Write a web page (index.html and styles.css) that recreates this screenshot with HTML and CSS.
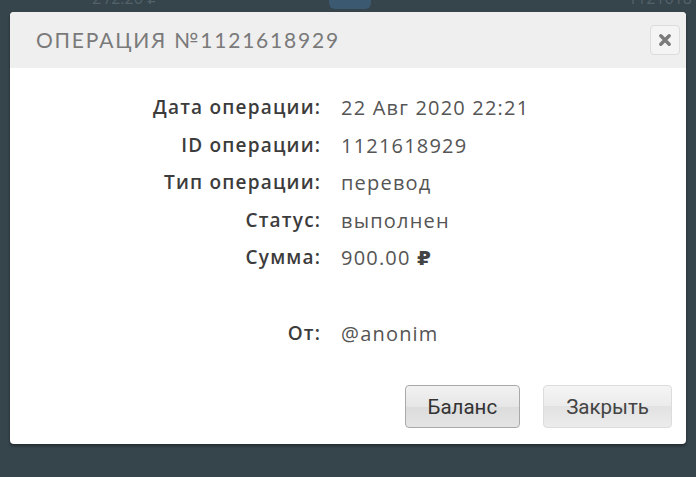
FILE: index.html
```html
<!DOCTYPE html>
<html lang="ru">
<head>
  <meta charset="UTF-8">
  <meta name="viewport" content="width=device-width, initial-scale=1.0">
  <title>Операция №1121618929</title>
  <link rel="stylesheet" href="styles.css">
</head>
<body>
  <div class="backdrop-row">
    <span class="bg-sum">2 /2.26 ₽</span>
    <span class="bg-badge"></span>
    <span class="bg-id">1121618</span>
  </div>
  <div class="modal">
    <header class="modal-header">
      <h2 class="modal-title">Операция №1121618929</h2>
      <button class="close-btn" type="button" aria-label="Закрыть">
        <svg width="14" height="14" viewBox="0 0 14 14">
          <path d="M2.8 2.8 L11.2 11.2 M11.2 2.8 L2.8 11.2" stroke="#7a7a7a" stroke-width="3.4" stroke-linecap="round"/>
        </svg>
      </button>
    </header>
    <div class="modal-body">
      <dl class="details">
        <dt>Дата операции:</dt><dd>22 Авг 2020 22:21</dd>
        <dt>ID операции:</dt><dd>1121618929</dd>
        <dt>Тип операции:</dt><dd>перевод</dd>
        <dt>Статус:</dt><dd>выполнен</dd>
        <dt>Сумма:</dt><dd>900.00 <b class="rub">₽</b></dd>
        <dt class="spacer"></dt><dd class="spacer"></dd>
        <dt>От:</dt><dd>@anonim</dd>
      </dl>
    </div>
    <footer class="modal-footer">
      <button class="btn btn-active" type="button">Баланс</button>
      <button class="btn" type="button">Закрыть</button>
    </footer>
  </div>
</body>
</html>
```

FILE: styles.css
```css
body {
  margin: 0;
  background: #36444b;
  font-family: "Open Sans", "DejaVu Sans", sans-serif;
  height: 477px;
  overflow: hidden;
}
.backdrop-row {
  height: 12px;
  overflow: hidden;
  display: flex;
  align-items: flex-end;
  font-size: 16px;
  line-height: 16px;
  color: #52626a;
}
.bg-sum {
  margin-left: 92px;
  margin-bottom: 6px;
}
.bg-badge {
  width: 42px;
  height: 9px;
  margin-left: 172px;
  margin-bottom: 3px;
  border-radius: 0 0 6px 6px;
  background: #3b5a72;
}
.bg-id {
  margin-left: auto;
  margin-right: 4px;
  margin-bottom: 6px;
}
.modal {
  margin: 0 10px;
  background: #fff;
  border-radius: 4px;
  box-shadow: 0 2px 3px rgba(0, 0, 0, 0.35);
  overflow: hidden;
}
.modal-header {
  height: 56px;
  background: #efefef;
  display: flex;
  align-items: center;
  justify-content: space-between;
  padding: 0 6px 0 26px;
}
.modal-title {
  margin: 0 0 2px;
  font-family: "Lato", sans-serif;
  font-weight: 400;
  font-size: 21px;
  letter-spacing: 1.8px;
  text-transform: uppercase;
  color: #7a7a7a;
}
.close-btn {
  width: 30px;
  height: 30px;
  padding: 0;
  display: flex;
  align-items: center;
  justify-content: center;
  background: #f4f4f4;
  border: 1px solid #dcdcdc;
  border-radius: 4px;
  cursor: pointer;
}
.modal-body {
  padding: 21px 0 0;
}
.details {
  margin: 0;
  display: grid;
  grid-template-columns: 310px 1fr;
  column-gap: 21px;
  font-size: 19px;
  line-height: 37.6px;
}
.details dt {
  text-align: right;
  font-weight: 600;
  letter-spacing: 1.2px;
  margin-right: -1.2px;
  color: #3c3c3c;
}
.details dd {
  margin: 0;
  font-size: 20px;
  letter-spacing: 1.2px;
  color: #555;
}
.details .spacer {
  height: 37.6px;
}
.rub {
  font-weight: 700;
  color: #444;
}
.modal-footer {
  display: flex;
  justify-content: flex-end;
  gap: 23px;
  padding: 33px 14px 16px;
}
.btn {
  height: 43px;
  padding: 0 22px;
  font-family: Roboto, sans-serif;
  font-size: 20.5px;
  color: #444;
  background: linear-gradient(#f5f5f5, #ebebeb 50%, #e2e2e2 50%, #ececec);
  border: 1px solid #dcdcdc;
  border-radius: 4px;
  cursor: pointer;
}
.btn-active {
  color: #333;
  border-color: #a9a9a9;
  background: linear-gradient(#f2f2f2, #e6e6e6 50%, #dcdcdc 50%, #e4e4e4);
}
```
